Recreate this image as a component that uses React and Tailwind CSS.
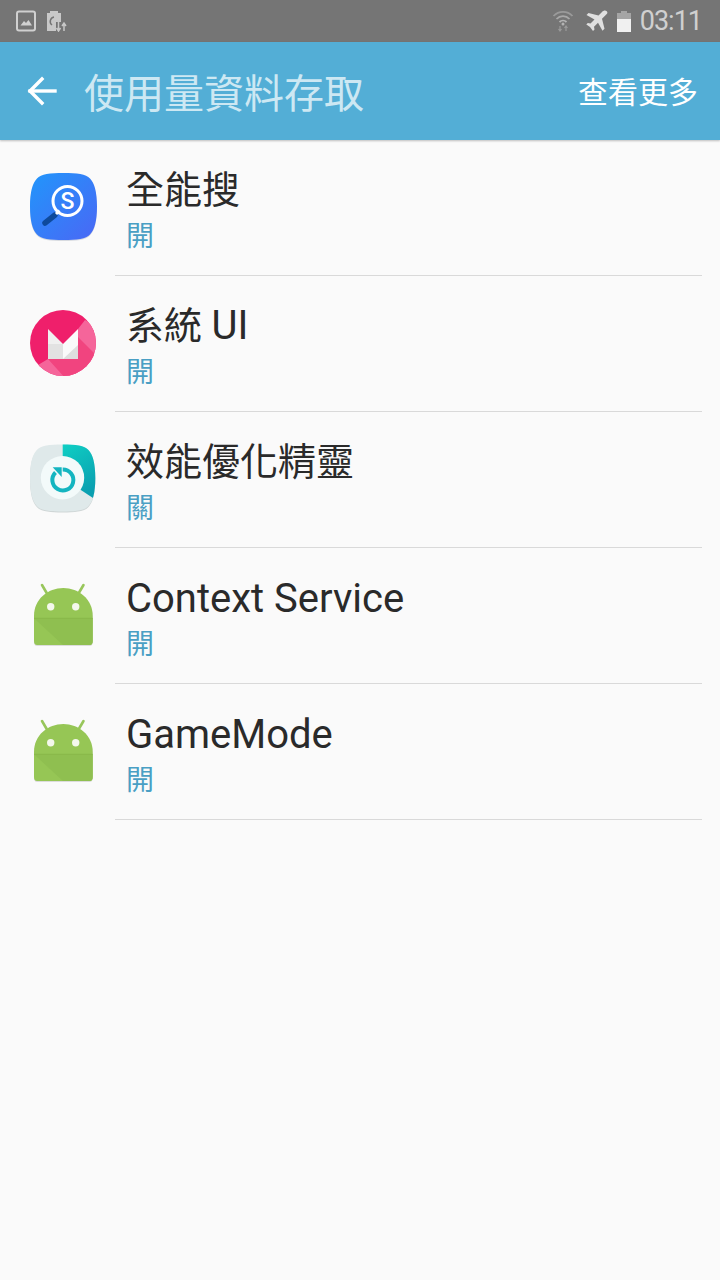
const cjk = "font-['Roboto','Noto_Sans_CJK_TC',sans-serif]";

const squircle = "M35.500 2C49 2 58 3 62 7.500C66.500 12 69 21 69 35.500C69 50 66.500 59 62 63.500C58 68 49 69 35.500 69C22 69 13 68 9 63.500C4.500 59 2 50 2 35.500C2 21 4.500 12 9 7.500C13 3 22 2 35.500 2Z";
const boostFit = "translate(0.050 -0.500) scale(0.975 1)";

const SearchIcon = () => (
  <svg width="70" height="70" viewBox="0 0 70 70">
    <defs>
      <linearGradient id="sg" x1="0" y1="0" x2="1" y2="1">
        <stop offset="0" stopColor="#2196fb" />
        <stop offset="1" stopColor="#4a67f5" />
      </linearGradient>
    </defs>
    <path d={squircle} fill="#d8dbe0" transform="translate(0 1)" />
    <path d={squircle} fill="url(#sg)" />
    <path d="M17 52 L27 44" stroke="#0e4a9c" strokeWidth="5.500" strokeLinecap="round" />
    <path d="M28 43 L31.500 39.500" stroke="#ffffff" strokeWidth="3" />
    <circle cx="39.500" cy="30" r="14.500" fill="none" stroke="#ffffff" strokeWidth="3" />
    <text x="39.500" y="38" textAnchor="middle" fill="#ffffff" fontSize="23" fontWeight="500" fontFamily="Roboto, sans-serif">S</text>
  </svg>
);

const MarshmallowIcon = () => (
  <svg width="70" height="70" viewBox="0 0 70 70">
    <defs>
      <clipPath id="mc"><circle cx="35" cy="36" r="33" /></clipPath>
    </defs>
    <g clipPath="url(#mc)">
      <rect width="70" height="70" fill="#ef1f6b" />
      <path d="M57 13 L70 20 V72 H0 L10 58 L20 52 H50 V22 Z" fill="#f5659a" />
      <path d="M50 30 L70 50 V72 H38 L20 52 H50 Z" fill="#f1447f" />
    </g>
    <path d="M20 22 L35 37 V52 H20 Z" fill="#f0f0f0" />
    <path d="M50 22 L35 37 V52 H50 Z" fill="#fafafa" />
    <path d="M20 37 L35 37 V52 H20 Z" fill="#e2e2e2" />
    <path d="M50 38 V52 H35 Z" fill="#dedede" />
  </svg>
);

const BoostIcon = () => (
  <svg width="70" height="70" viewBox="0 0 70 70">
    <defs>
      <linearGradient id="bg" x1="0" y1="0" x2="0.4" y2="1">
        <stop offset="0" stopColor="#0fd0c4" />
        <stop offset="1" stopColor="#0a9fb0" />
      </linearGradient>
      <clipPath id="bc">
        <path d={squircle} transform={boostFit} />
      </clipPath>
    </defs>
    <path d={squircle} fill="#cfd6d6" transform={`translate(0 1) ${boostFit}`} />
    <g clipPath="url(#bc)">
      <rect width="70" height="70" fill="#dfe9ea" />
      <path d="M34.700 0 H70 V57 L65 55 L34.700 35 Z" fill="url(#bg)" />
    </g>
    <circle cx="34.500" cy="34.700" r="21.700" fill="#f3fafa" />
    <path d="M34.700 26.500 A10.500 10.500 0 1 1 27.500 29.500" fill="none" stroke="#14b5c0" strokeWidth="4" />
    <path d="M24.700 24.300 H33.700 V34 Z" fill="#14b5c0" />
  </svg>
);

const AndroidIcon = () => (
  <svg width="70" height="70" viewBox="0 0 70 70">
    <path d="M14 6 L18.700 14 M55.500 6 L50.800 14" stroke="#98c65b" strokeWidth="2.600" strokeLinecap="round" />
    <path d="M6 62 V37 C6 20 20 9 35.300 9 S64.700 20 64.700 37 V62 Q64.700 66 61.700 66 H9 Q6 66 6 62Z" fill="#dcdcdc" transform="translate(0 1)" />
    <path d="M6 62 V37 C6 20 20 9 35.300 9 S64.700 20 64.700 37 V62 Q64.700 66 61.700 66 H9 Q6 66 6 62Z" fill="#96c655" />
    <path d="M6 39.300 H64.700 V62 Q64.700 66 61.700 66 H35 Z" fill="#8fbf50" />
    <path d="M6 39.300 H64.700" stroke="#86b548" strokeWidth="0.800" />
    <circle cx="22.700" cy="27.700" r="3.700" fill="#f4f8ec" />
    <circle cx="47.700" cy="27.700" r="3.700" fill="#f4f8ec" />
  </svg>
);

const apps = [
  { id: "search", name: "全能搜", state: "開", Icon: SearchIcon },
  { id: "systemui", name: <>系統 <span className="text-[40px]">UI</span></>, state: "開", Icon: MarshmallowIcon },
  { id: "boost", name: "效能優化精靈", state: "關", Icon: BoostIcon },
  { id: "context", name: <span className="block pt-[1px] -mb-[1px] text-[40px]">Context Service</span>, state: "開", Icon: AndroidIcon },
  { id: "gamemode", name: <span className="block pt-[1px] -mb-[1px] text-[40px]">GameMode</span>, state: "開", Icon: AndroidIcon },
];

const StatusBar = () => (
  <div className="h-[42px] bg-[#757575] flex items-center pl-4 pr-[18px] shrink-0">
    <svg width="20" height="22" viewBox="0 0 20 22">
      <rect x="1" y="1.500" width="18" height="19" rx="2" fill="none" stroke="#d0d0d0" strokeWidth="2" />
      <path d="M4.500 15.500 L8 11 L10 13 L12.500 10 L16 15.500 Z" fill="#d0d0d0" />
    </svg>
    <svg className="ml-[11px]" width="21" height="22" viewBox="0 0 21 22">
      <path d="M0 3 H3 V1 H11 V3 H14 V21 H0 Z" fill="#c8c8c8" />
      <path d="M7 7 A4.500 4.500 0 0 0 5 15" fill="none" stroke="#757575" strokeWidth="1.500" />
      <path d="M9 12 H21 V22 H9 Z" fill="#757575" />
      <path d="M11.500 12 V21 M9.500 18 L11.500 21 L13.500 18 M17 21 V13 M15 16 L17 13 L19 16" stroke="#c8c8c8" strokeWidth="1.500" fill="none" />
    </svg>
    <div className="flex-1" />
    <svg width="22" height="22" viewBox="0 0 22 22">
      <path d="M1.500 6 A13 13 0 0 1 20.500 6" fill="none" stroke="#9a9a9a" strokeWidth="1.800" />
      <path d="M4.500 9 A9 9 0 0 1 17.500 9" fill="none" stroke="#a8a8a8" strokeWidth="1.800" />
      <path d="M7.500 12 A5 5 0 0 1 14.500 12" fill="none" stroke="#b4b4b4" strokeWidth="1.800" />
      <circle cx="11" cy="14" r="1.500" fill="#b4b4b4" />
      <path d="M8 16 V21 M6.500 19 L8 21 L9.500 19 M14 21 V16 M12.500 18 L14 16 L15.500 18" stroke="#9a9a9a" strokeWidth="1.200" fill="none" />
    </svg>
    <svg className="ml-[12px]" width="22" height="22" viewBox="0 0 22 22">
      <path d="M21 1.500 C19.500 0 17.500 .5 16 2 L12.500 5.500 L2.500 3 L.5 5 L8.500 9.500 L4.500 13.500 L1.800 13 L.3 14.500 L4 17 L7 21 L8.500 19.500 L8 16.800 L12 12.800 L16.500 20.800 L18.500 18.800 L16 8.800 L19.500 5.300 C21 3.800 22 3 21 1.500Z" fill="#e0e0e0" />
    </svg>
    <div className="ml-[9px] w-[14px] h-[21px] flex flex-col items-center">
      <div className="w-[6px] h-[2px] bg-[#a5a5a5]" />
      <div className="w-[14px] h-[6px] bg-[#a5a5a5]" />
      <div className="w-[14px] h-[13px] bg-[#f0f0f0]" />
    </div>
    <span className="ml-[9px] text-[27px] leading-none tracking-[-1px] text-[#d0d0d0] font-['Roboto',sans-serif]">03:11</span>
  </div>
);

const Header = () => (
  <div className="h-[98px] bg-[#53aed6] flex items-center pl-[26px] pr-[22px] shrink-0 shadow-[0_1px_2px_rgba(0,0,0,0.25)] relative">
    <svg width="32" height="32" viewBox="0 0 32 32" fill="none" stroke="#ffffff" strokeWidth="3.400" strokeLinecap="square">
      <path d="M4 16 H29" />
      <path d="M16 4 L4 16 L16 28" />
    </svg>
    <span className={`ml-[26px] pt-[7px] text-[40px] leading-none text-[#cde8f3] ${cjk}`}>使用量資料存取</span>
    <div className="flex-1" />
    <span className={`pt-[4px] text-[30px] leading-none text-[#ffffff] ${cjk}`}>查看更多</span>
  </div>
);

const AppRow = ({ name, state, Icon }) => (
  <div className="h-[136px] flex">
    <div className="w-[115px] shrink-0 pl-[28px] pt-[31px]">
      <Icon />
    </div>
    <div className="flex-1 border-b border-[#d9d9d9] mr-[18px] pl-[11px] flex flex-col">
      <span className={`mt-[28px] text-[38px] leading-[44px] text-[#2a2a2a] ${cjk}`}>{name}</span>
      <span className={`mt-[7px] text-[28px] leading-[36px] text-[#4a9fc4] ${cjk}`}>{state}</span>
    </div>
  </div>
);

export default function App() {
  return (
    <div className="w-[720px] h-[1280px] bg-[#fafafa] flex flex-col overflow-hidden">
      <StatusBar />
      <Header />
      <div className="flex flex-col">
        {apps.map((app) => (
          <AppRow key={app.id} {...app} />
        ))}
      </div>
    </div>
  );
}
